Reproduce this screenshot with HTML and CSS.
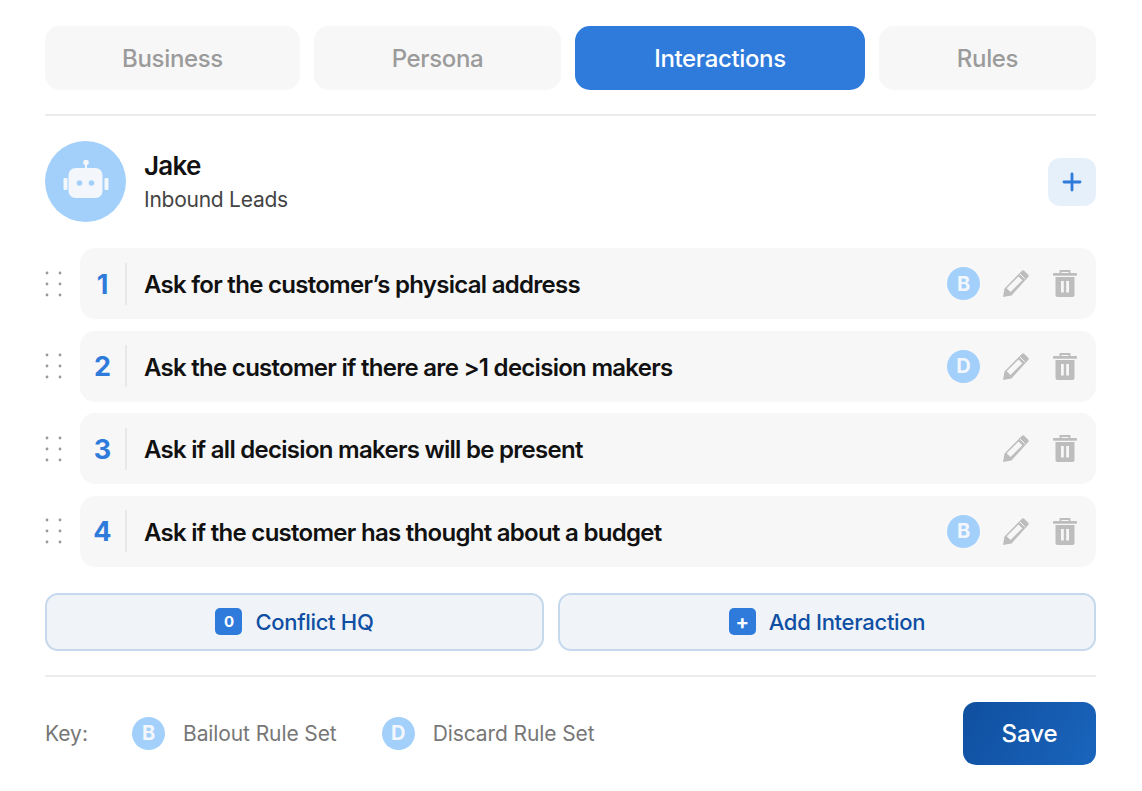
FILE: index.html
```html
<!DOCTYPE html>
<html>
<head>
  <meta charset="utf-8">
  <meta name="viewport" content="width=device-width, initial-scale=1">
  <title>Interactions</title>
  <link rel="stylesheet" href="styles.css">
</head>
<body>
  <svg class="defs" width="0" height="0">
    <symbol id="grip" viewBox="0 0 18 26">
      <g fill="#999"><circle cx="2" cy="2" r="1.4"/><circle cx="15" cy="2" r="1.4"/><circle cx="2" cy="13" r="1.4"/><circle cx="15" cy="13" r="1.4"/><circle cx="2" cy="24" r="1.4"/><circle cx="15" cy="24" r="1.4"/></g>
    </symbol>
    <symbol id="pencil" viewBox="0 0 27 27">
      <path d="M20 .8a1.600 1.600 0 0 1 2.200 0l4 4a1.600 1.600 0 0 1 0 2.200L9.500 25.500 1 27l1.500-8.500z" fill="#bdbdbd"/>
      <path d="M16.500 6.500l3.800 3.800L8.500 22l-3.800-3.800z" fill="#f7f7f7"/>
      <path d="M18 4l4.800 4.800" stroke="#f7f7f7" stroke-width="1"/>
    </symbol>
    <symbol id="trash" viewBox="0 0 24 27">
      <path d="M7.500 3.500V1h9v2.500" fill="none" stroke="#bdbdbd" stroke-width="1.800"/>
      <rect y="3" width="24" height="2.800" rx="0.800" fill="#bdbdbd"/>
      <path d="M2.500 7h19v18a2 2 0 0 1-2 2h-15a2 2 0 0 1-2-2z" fill="#bdbdbd"/>
      <rect x="8" y="11" width="2.800" height="11.500" fill="#f7f7f7"/>
      <rect x="13.200" y="11" width="2.800" height="11.500" fill="#f7f7f7"/>
    </symbol>
  </svg>

  <div class="tabs">
    <button class="tab">Business</button>
    <button class="tab">Persona</button>
    <button class="tab active">Interactions</button>
    <button class="tab">Rules</button>
  </div>

  <div class="agent">
    <div class="avatar">
      <svg width="46" height="45" viewBox="0 0 46 45">
        <circle cx="23" cy="3.500" r="2.800" fill="#f3f6fa"/>
        <rect x="22" y="4" width="2" height="6" fill="#f3f6fa"/>
        <rect x="5.500" y="9" width="34" height="30" rx="7" fill="#f3f6fa"/>
        <rect x="0.500" y="19" width="4" height="12" rx="1.200" fill="#f3f6fa"/>
        <rect x="41.500" y="19" width="4" height="12" rx="1.200" fill="#f3f6fa"/>
        <circle cx="16.500" cy="24" r="2.800" fill="#a2d0fb"/>
        <circle cx="28.500" cy="24" r="2.800" fill="#a2d0fb"/>
      </svg>
    </div>
    <div class="agent-text">
      <div class="agent-name">Jake</div>
      <div class="agent-role">Inbound Leads</div>
    </div>
    <button class="add-square">
      <svg width="20" height="20" viewBox="0 0 20 20"><path d="M10 2v16M2 10h16" stroke="#2e7bdc" stroke-width="2.800" stroke-linecap="round"/></svg>
    </button>
  </div>

  <div class="rows">
    <div class="row-wrap">
      <svg class="grip" width="18" height="26"><use href="#grip"/></svg>
      <div class="row">
        <span class="num">1</span>
        <span class="label">Ask for the customer’s physical address</span>
        <span class="badge">B</span>
        <svg class="pencil" width="27" height="27"><use href="#pencil"/></svg>
        <svg class="trash" width="24" height="27"><use href="#trash"/></svg>
      </div>
    </div>
    <div class="row-wrap">
      <svg class="grip" width="18" height="26"><use href="#grip"/></svg>
      <div class="row">
        <span class="num">2</span>
        <span class="label">Ask the customer if there are &gt;1 decision makers</span>
        <span class="badge">D</span>
        <svg class="pencil" width="27" height="27"><use href="#pencil"/></svg>
        <svg class="trash" width="24" height="27"><use href="#trash"/></svg>
      </div>
    </div>
    <div class="row-wrap">
      <svg class="grip" width="18" height="26"><use href="#grip"/></svg>
      <div class="row">
        <span class="num">3</span>
        <span class="label">Ask if all decision makers will be present</span>
        <svg class="pencil" width="27" height="27"><use href="#pencil"/></svg>
        <svg class="trash" width="24" height="27"><use href="#trash"/></svg>
      </div>
    </div>
    <div class="row-wrap">
      <svg class="grip" width="18" height="26"><use href="#grip"/></svg>
      <div class="row">
        <span class="num">4</span>
        <span class="label">Ask if the customer has thought about a budget</span>
        <span class="badge">B</span>
        <svg class="pencil" width="27" height="27"><use href="#pencil"/></svg>
        <svg class="trash" width="24" height="27"><use href="#trash"/></svg>
      </div>
    </div>
  </div>

  <div class="actions">
    <button class="action"><span class="chip">0</span>Conflict HQ</button>
    <button class="action"><span class="chip chip-plus">+</span>Add Interaction</button>
  </div>

  <div class="footer">
    <span class="key">Key:</span>
    <span class="badge">B</span>
    <span class="key-label">Bailout Rule Set</span>
    <span class="badge">D</span>
    <span class="key-label">Discard Rule Set</span>
    <button class="save">Save</button>
  </div>
</body>
</html>
```

FILE: styles.css
```css
html, body {
  margin: 0;
  background: #fff;
}

body {
  font-family: 'Inter', 'Liberation Sans', sans-serif;
  padding: 26px 46px 0 45px;
  color: #111;
}

button {
  font-family: inherit;
  border: none;
  cursor: pointer;
}

.defs {
  display: block;
  height: 0;
}

.tabs {
  display: grid;
  grid-template-columns: 255px 247px 290px 1fr;
  gap: 14px;
  padding-bottom: 24px;
  border-bottom: 2px solid #ececec;
}

.tab {
  height: 64px;
  padding: 0;
  border-radius: 15px;
  background: #f7f7f7;
  color: #9b9b9b;
  font-size: 24px;
  font-weight: 500;
  letter-spacing: -0.35px;
}

.tab.active {
  background: #2e7bdc;
  color: #fff;
}

.agent {
  display: flex;
  align-items: center;
  margin-top: 25px;
}

.avatar {
  width: 81px;
  height: 81px;
  border-radius: 50%;
  background: #a2d0fb;
  display: flex;
  align-items: center;
  justify-content: center;
}

.agent-text {
  flex: 1;
  margin-left: 18px;
  padding-top: 2px;
}

.agent-name {
  font-size: 26px;
  font-weight: 600;
  letter-spacing: -0.7px;
  line-height: 32px;
  color: #111;
}

.agent-role {
  font-size: 21px;
  line-height: 30px;
  margin-top: 3px;
  color: #444;
  letter-spacing: -0.25px;
}

.add-square {
  width: 48px;
  height: 48px;
  padding: 0;
  border-radius: 12px;
  background: #e6f0fb;
  display: flex;
  align-items: center;
  justify-content: center;
}

.rows {
  display: flex;
  flex-direction: column;
  gap: 11.5px;
  margin-top: 26px;
}

.row-wrap {
  display: flex;
  align-items: center;
}

.grip {
  margin-right: 17px;
  flex-shrink: 0;
}

.row {
  flex: 1;
  height: 71px;
  display: flex;
  align-items: center;
  background: #f7f7f7;
  border-radius: 15px;
  padding-right: 19px;
}

.num {
  width: 45px;
  height: 42px;
  line-height: 44px;
  text-align: center;
  border-right: 2px solid #e8e8e8;
  color: #2e7bdc;
  font-size: 27px;
  font-weight: 700;
}

.label {
  flex: 1;
  margin-left: 17px;
  padding-top: 2px;
  font-size: 24px;
  font-weight: 600;
  letter-spacing: -0.72px;
  color: #111;
}

.badge {
  width: 33px;
  height: 33px;
  border-radius: 50%;
  background: #a2d0fb;
  color: #f3f7fc;
  font-size: 20px;
  font-weight: 700;
  display: flex;
  align-items: center;
  justify-content: center;
  flex-shrink: 0;
}

.pencil {
  margin-left: 22px;
}

.trash {
  margin-left: 24px;
}

.actions {
  display: grid;
  grid-template-columns: 499px 1fr;
  gap: 14px;
  margin-top: 26px;
  padding-bottom: 24px;
  border-bottom: 2px solid #ececec;
}

.action {
  height: 58px;
  padding: 0;
  border: 2px solid #c6d9ec;
  border-radius: 13px;
  background: #f0f4f9;
  color: #0f4fa3;
  font-size: 22px;
  font-weight: 500;
  letter-spacing: -0.3px;
  display: flex;
  align-items: center;
  justify-content: center;
}

.chip {
  width: 27px;
  height: 27px;
  margin-right: 13px;
  border-radius: 5px;
  background: #2e7bdc;
  color: #fff;
  font-size: 15px;
  font-weight: 700;
  display: flex;
  align-items: center;
  justify-content: center;
}

.chip-plus {
  font-size: 20px;
}

.footer {
  display: flex;
  align-items: center;
  margin-top: 25px;
  font-size: 21px;
}

.key {
  color: #777;
  width: 87px;
}

.key-label {
  color: #777;
  margin-left: 18px;
  margin-right: 45px;
  letter-spacing: -0.1px;
}

.save {
  margin-left: auto;
  width: 133px;
  height: 63px;
  border-radius: 13px;
  background: linear-gradient(120deg, #0f4f9f, #1a65bd);
  color: #fff;
  font-size: 24px;
  font-weight: 500;
}
```
